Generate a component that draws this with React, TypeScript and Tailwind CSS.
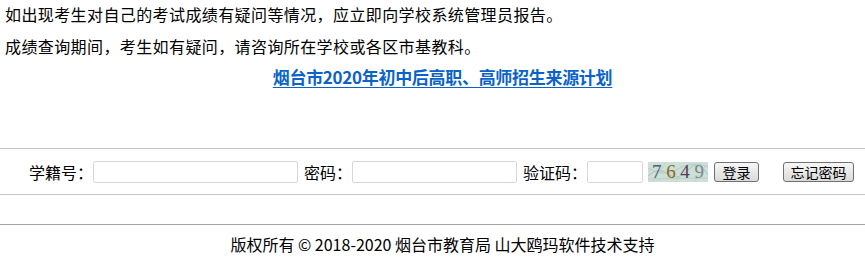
import React from "react";

const cjk = "font-['Noto_Sans_CJK_SC','Noto_Sans',sans-serif]";

function Captcha() {
  return (
    <div className="relative ml-[5px] h-[20px] w-[60px] bg-[#cddfd6]">
      <svg className="absolute inset-0" width="60" height="20" viewBox="0 0 60 20">
        <path d="M0 14 Q10 4 20 12 T40 8 T60 13" stroke="#a9c4b8" strokeWidth="1" fill="none" />
        <path d="M0 6 Q15 16 30 7 T60 5" stroke="#b6cdc2" strokeWidth="1" fill="none" />
        <path d="M5 20 L18 0 M28 20 L40 2 M46 20 L58 3" stroke="#bcd2c7" strokeWidth="0.8" />
        <path d="M0 17 L60 16" stroke="#b0c8bd" strokeWidth="0.6" />
      </svg>
      <div className="relative flex h-[20px] items-center justify-between px-[4px] font-['Liberation_Serif',serif] text-[19px] leading-[20px]">
        <span className="text-[#4d5d7a]">7</span>
        <span className="text-[#8b6a2c]">6</span>
        <span className="text-[#5b3b5e]">4</span>
        <span className="text-[#7c8590]">9</span>
      </div>
    </div>
  );
}

function Button({ label, className }: { label: string; className: string }) {
  return (
    <button
      className={`h-[20px] rounded-[3px] border border-[#707070] bg-gradient-to-b from-[#f7f7f7] to-[#dadada] text-[14px] leading-none text-black ${className}`}
    >
      {label}
    </button>
  );
}

export default function App() {
  return (
    <div className={`h-[268px] w-[865px] overflow-hidden bg-white text-black ${cjk}`}>
      <div className="pl-[5px] text-[16px] tracking-[0.4px]">
        <p className="h-[28px] leading-[28px]">
          如出现考生对自己的考试成绩有疑问等情况，应立即向学校系统管理员报告。
        </p>
        <p className="mt-[4px] h-[28px] leading-[28px]">
          成绩查询期间，考生如有疑问，请咨询所在学校或各区市基教科。
        </p>
      </div>
      <div className="mt-[3px] h-[28px] pl-[20px] text-center leading-[28px]">
        <a
          href="#"
          className="text-[17px] font-bold tracking-[-0.3px] text-[#0a63c8] underline underline-offset-[3px]"
        >
          烟台市2020年初中后高职、高师招生来源计划
        </a>
      </div>

      <div className="mt-[57px] flex h-[47px] items-center border-y border-[#c4c4c4] pl-[29px] text-[16px]">
        <span>学籍号：</span>
        <input className="h-[22px] w-[205px] rounded-[2px] border border-[#d6d6dc] outline-none" />
        <span className="ml-[6px]">密码：</span>
        <input
          type="password"
          className="h-[22px] w-[165px] rounded-[2px] border border-[#d6d6dc] outline-none"
        />
        <span className="ml-[6px]">验证码：</span>
        <input className="h-[22px] w-[56px] rounded-[2px] border border-[#d6d6dc] outline-none" />
        <Captcha />
        <Button label="登录" className="ml-[6px] w-[45px]" />
        <Button label="忘记密码" className="ml-[24px] w-[71px]" />
      </div>

      <div className="mt-[29px] h-[40px] border-t border-[#a4a4a4] pl-[20px] text-center text-[16px] leading-[38px] text-black">
        版权所有 © 2018-2020 烟台市教育局 山大鸥玛软件技术支持
      </div>
    </div>
  );
}
